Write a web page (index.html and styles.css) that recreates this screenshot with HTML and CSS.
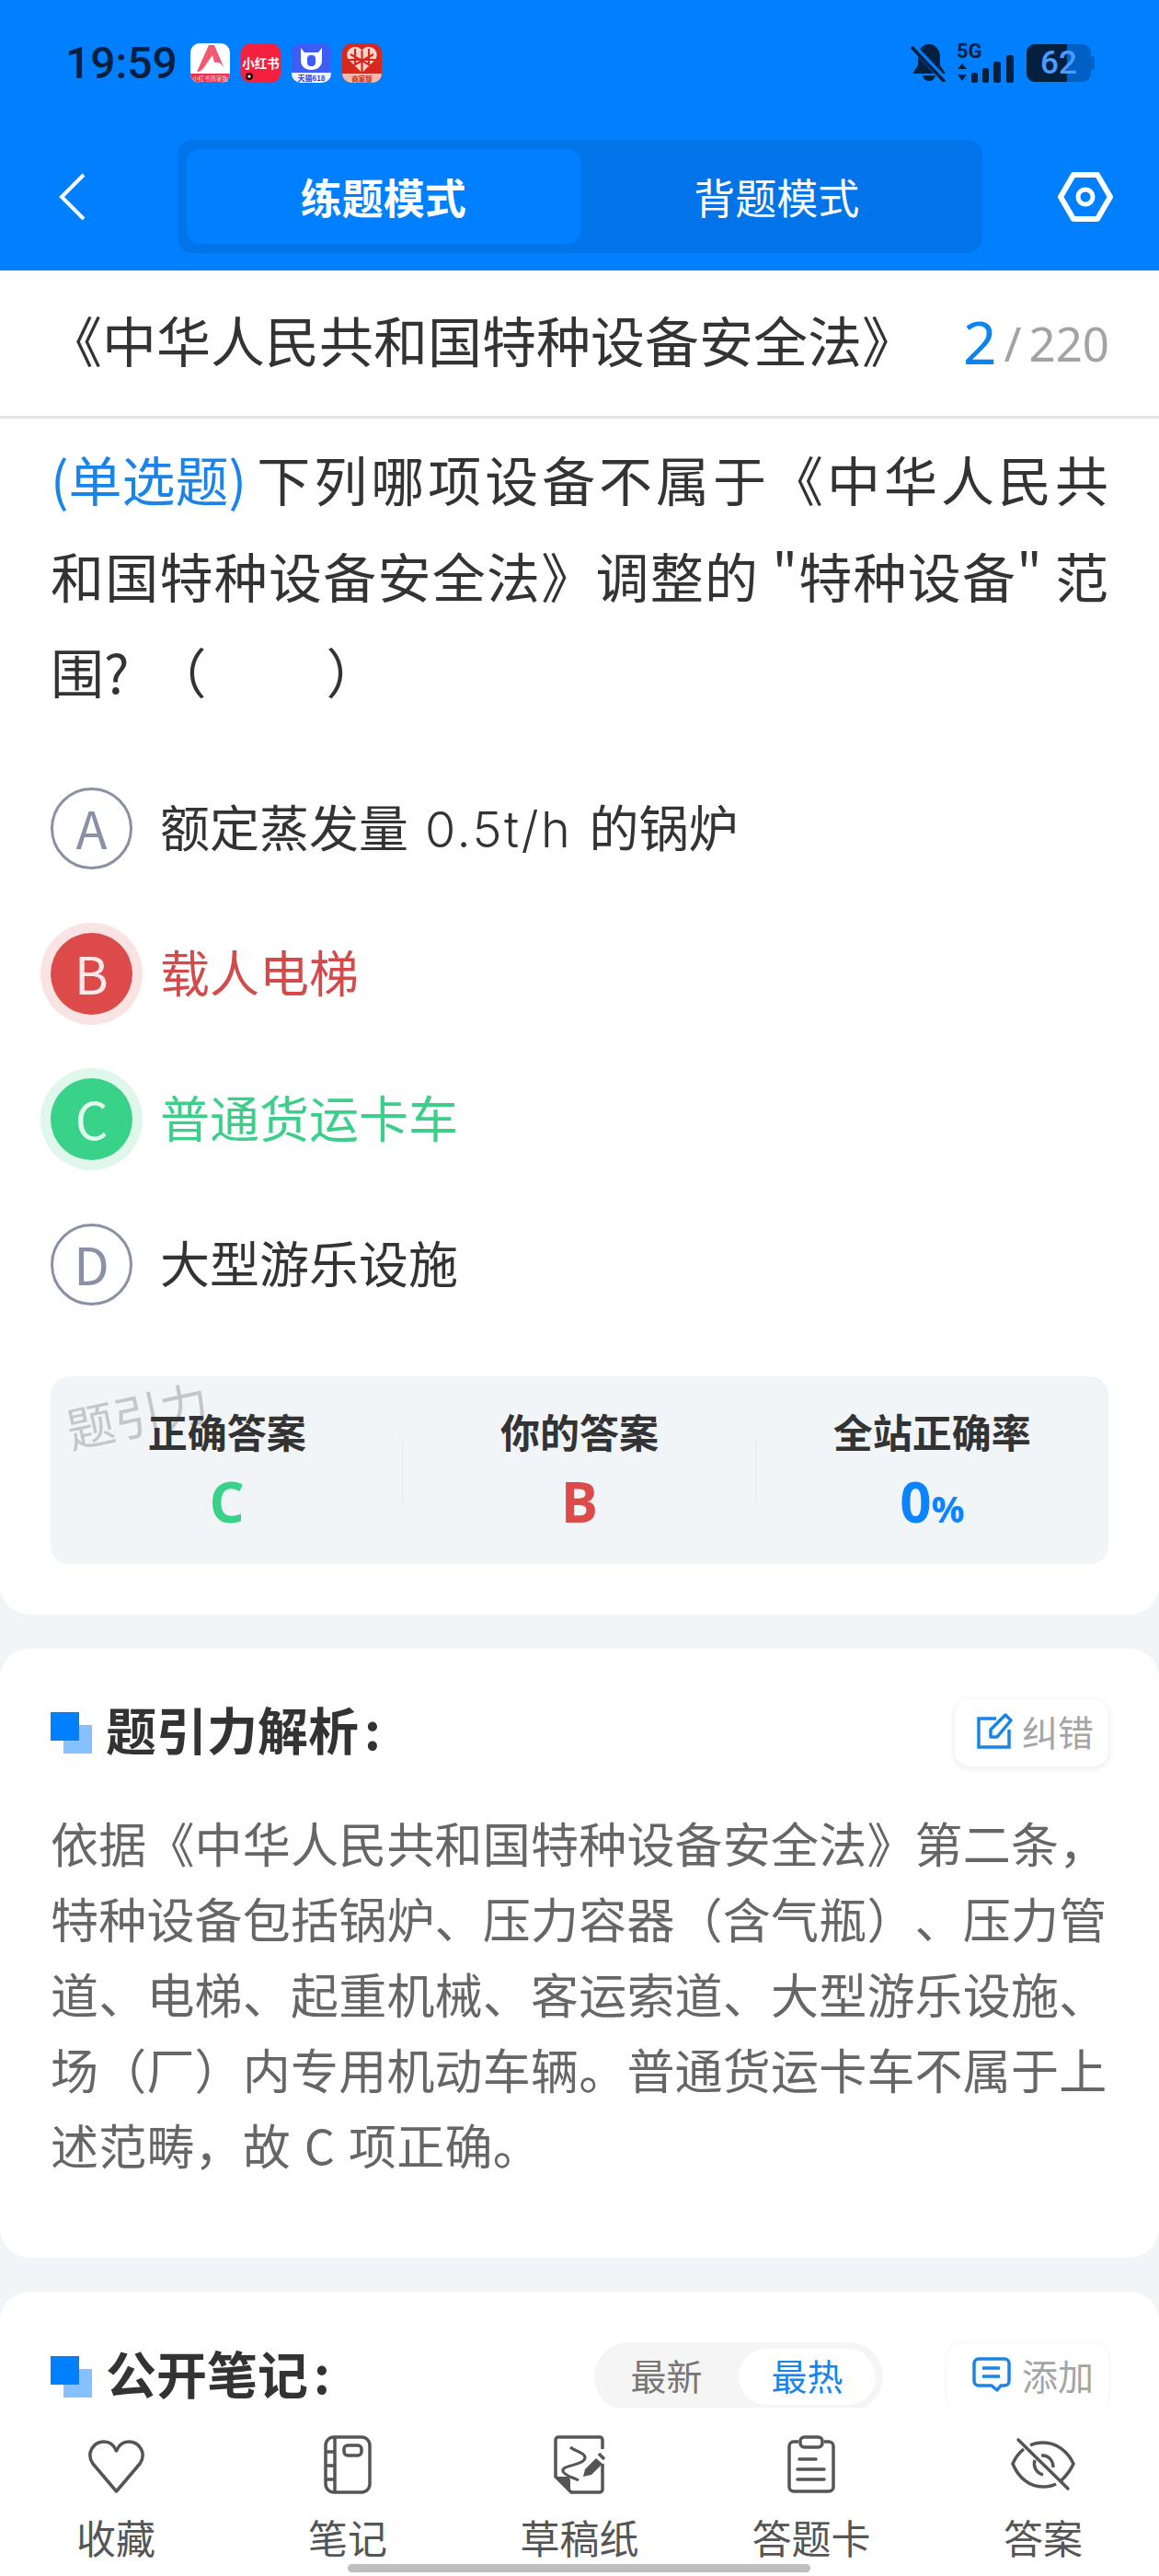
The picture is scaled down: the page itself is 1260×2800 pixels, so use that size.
FILE: index.html
```html
<!DOCTYPE html>
<html lang="zh-CN">
<head>
<meta charset="UTF-8">
<meta name="viewport" content="width=device-width, initial-scale=1.0">
<title>练题模式</title>
<link rel="stylesheet" href="styles.css">
</head>
<body>
<div class="phone">
    <header class="top">
        <div class="status">
            <span class="time">19:59</span>
            <svg class="app" viewBox="0 0 43 43">
                <rect width="43" height="43" rx="10" fill="#fff"/>
                <path d="M0 33H43A10 10 0 0 1 33 43H10A10 10 0 0 1 0 33Z" fill="#ee2f50"/>
                <path d="M7 31 20 2H26L37 28C34 21 29 20 26 21L24 13 15 26C12 30 10 31 7 31Z" fill="#f0596f"/>
                <text class="app-text" x="21.5" y="41" font-size="6.5" fill="#ffd5dc" text-anchor="middle">小红书商家版</text>
            </svg>
            <svg class="app" viewBox="0 0 43 43">
                <rect width="43" height="43" rx="10" fill="#f5203f"/>
                <text class="app-text bold" x="21.5" y="27" font-size="13.5" fill="#fff" text-anchor="middle">小红书</text>
                <circle cx="9" cy="36" r="4" fill="#200"/>
                <circle cx="9" cy="36" r="1.6" fill="#fff"/>
            </svg>
            <svg class="app" viewBox="0 0 43 43">
                <rect width="43" height="43" rx="10" fill="#3f5cf5"/>
                <path d="M0 32H43V33A10 10 0 0 1 33 43H10A10 10 0 0 1 0 33Z" fill="#f2f5ff"/>
                <path d="M10 5 14 10H29L33 5V19C33 25 28 29 21.500 29S10 25 10 19Z" fill="#fff"/>
                <rect x="17" y="13" width="9" height="12" rx="4" fill="#3f5cf5"/>
                <text class="app-text bold" x="21.5" y="41" font-size="8" fill="#2b45d8" text-anchor="middle">天猫618</text>
            </svg>
            <svg class="app" viewBox="0 0 43 43">
                <rect width="43" height="43" rx="10" fill="#d8281e"/>
                <path d="M0 33H43A10 10 0 0 1 33 43H10A10 10 0 0 1 0 33Z" fill="#f6b8a8"/>
                <path d="M21.500 32 7 18C2 10 9 3 15 4 18 4 20 6 21.500 8 23 6 25 4 28 4 34 3 41 10 36 18Z" fill="#f7d5cb"/>
                <path d="M21.500 8V32M9 12 34 26M34 12 9 26M14 6V24M29 6V24M6 18H37" stroke="#d8281e" stroke-width="2.200" fill="none"/>
                <text class="app-text bold" x="21.5" y="41.500" font-size="7.500" fill="#c9301f" text-anchor="middle">商家版</text>
            </svg>
            <div class="status-right">
                <svg class="bell" viewBox="0 0 40 42">
                    <path d="M20 1C27 1 32 7 32 15V24L38 33H2L8 24V15C8 7 13 1 20 1Z" fill="#04203f"/>
                    <path d="M13 35H27C26 39 23 41 20 41S14 39 13 35Z" fill="#04203f"/>
                    <path d="M2 3 38 41" stroke="#0080ff" stroke-width="7"/>
                    <path d="M1 4 37 42" stroke="#04203f" stroke-width="3.500"/>
                </svg>
                <svg class="signal" viewBox="0 0 63 43">
                    <text class="net" x="0" y="16" font-size="22">5G</text>
                    <path d="M6 22 11 28H1ZM6 41 1 34H11Z" fill="#04203f"/>
                    <rect x="16" y="32" width="7" height="11" rx="2.500" fill="#04203f"/>
                    <rect x="28" y="27" width="7" height="16" rx="2.500" fill="#04203f"/>
                    <rect x="40" y="20" width="8" height="23" rx="2.500" fill="#04203f"/>
                    <rect x="54" y="13" width="8" height="30" rx="2.500" fill="#04203f"/>
                </svg>
                <div class="battery">
                    <div class="battery-fill"></div>
                    <span class="battery-num">62</span>
                </div>
            </div>
        </div>
        <nav class="nav">
            <svg class="back" viewBox="0 0 29 52">
                <polyline points="27,2 3,26 27,50" fill="none" stroke="#fff" stroke-width="4"/>
            </svg>
            <div class="seg">
                <div class="seg-item on">练题模式</div>
                <div class="seg-item">背题模式</div>
            </div>
            <svg class="gear" viewBox="0 0 60 54">
                <polygon points="17,3 43,3 57,27 43,51 17,51 3,27" fill="none" stroke="#fff" stroke-width="6" stroke-linejoin="round"/>
                <circle cx="30" cy="27" r="8" fill="none" stroke="#fff" stroke-width="5"/>
            </svg>
        </nav>
    </header>

    <main class="scroll">
        <section class="card first">
            <div class="book">
                <div class="book-name">《中华人民共和国特种设备安全法》</div>
                <div class="count"><span class="cur">2</span><span class="slash">/</span><span class="total">220</span></div>
            </div>
            <div class="question">
                <span class="q-line"><span class="q-type">(单选题)</span>下列哪项设备不属于《中华人民共</span>
                和国特种设备安全法》调整的 "特种设备" 范围?&nbsp; （&nbsp;&nbsp;&nbsp;&nbsp;&nbsp;&nbsp;&nbsp;&nbsp;&nbsp;&nbsp;）
            </div>
            <ul class="options">
                <li class="opt"><span class="mark">A</span><span>额定蒸发量 <span class="latin">0.5t/h</span> 的锅炉</span></li>
                <li class="opt wrong"><span class="mark">B</span><span>载人电梯</span></li>
                <li class="opt right"><span class="mark">C</span><span>普通货运卡车</span></li>
                <li class="opt"><span class="mark">D</span><span>大型游乐设施</span></li>
            </ul>
            <div class="stats">
                <div class="watermark">题引力</div>
                <div class="stat">
                    <div class="stat-name">正确答案</div>
                    <div class="stat-val green">C</div>
                </div>
                <div class="stat line">
                    <div class="stat-name">你的答案</div>
                    <div class="stat-val red">B</div>
                </div>
                <div class="stat line">
                    <div class="stat-name">全站正确率</div>
                    <div class="stat-val blue">0<small>%</small></div>
                </div>
            </div>
        </section>

        <section class="card analysis">
            <div class="sec-head">
                <div class="sec-title"><span class="squares"></span>题引力解析<span class="colon">:</span></div>
                <div class="mini-btn">
                    <svg class="mini-icon" viewBox="0 0 40 40">
                        <path d="M21 7H2V38H35V19" fill="none" stroke="#1a84e8" stroke-width="3.500"/>
                        <path d="M15 27V19L31 3 37 9 22 27Z" fill="none" stroke="#1a84e8" stroke-width="3.500" stroke-linejoin="round"/>
                    </svg>
                    纠错
                </div>
            </div>
            <p class="analysis-text">依据《中华人民共和国特种设备安全法》第二条，特种设备包括锅炉、压力容器（含气瓶）、压力管道、电梯、起重机械、客运索道、大型游乐设施、场（厂）内专用机动车辆。普通货运卡车不属于上述范畴，故 C 项正确。</p>
        </section>

        <section class="card notes">
            <div class="sec-head">
                <div class="sec-title"><span class="squares"></span>公开笔记<span class="colon">:</span></div>
                <div class="sort">
                    <span class="sort-item">最新</span>
                    <span class="sort-item on">最热</span>
                </div>
                <div class="mini-btn add">
                    <svg class="mini-icon" viewBox="0 0 42 38">
                        <path d="M7 2H35A5 5 0 0 1 40 7V26A5 5 0 0 1 35 31H31L27 36 21 31H7A5 5 0 0 1 2 26V7A5 5 0 0 1 7 2Z" fill="none" stroke="#1a84e8" stroke-width="3.500" stroke-linejoin="round"/>
                        <path d="M11 12H30M11 21H30" stroke="#1a84e8" stroke-width="3.500"/>
                    </svg>
                    添加
                </div>
            </div>
        </section>
    </main>

    <footer class="tabs">
        <div class="tab">
            <svg class="tab-icon" width="65" height="64" viewBox="0 0 65 64">
                <path d="M32.500 61 7 31C-1 19 8 7 19 7 25 7 30 11 32.500 17 35 11 40 7 46 7 57 7 66 19 58 31Z" fill="none" stroke="#555" stroke-width="3.500" stroke-linejoin="round"/>
            </svg>
            <span>收藏</span>
        </div>
        <div class="tab">
            <svg class="tab-icon" width="52" height="64" viewBox="0 0 52 64">
                <rect x="2" y="2" width="48" height="60" rx="9" fill="none" stroke="#555" stroke-width="3.500"/>
                <path d="M12 2V62M2 18H12M2 33H12M2 48H12" fill="none" stroke="#555" stroke-width="3.500"/>
                <rect x="22" y="11" width="19" height="11" rx="4" fill="none" stroke="#555" stroke-width="3.500"/>
            </svg>
            <span>笔记</span>
        </div>
        <div class="tab">
            <svg class="tab-icon" width="56" height="64" viewBox="0 0 56 64">
                <path d="M53 15V5A3 3 0 0 0 50 2H5A3 3 0 0 0 2 5V45L19 62H50A3 3 0 0 0 53 59V31" fill="none" stroke="#555" stroke-width="3.500" stroke-linejoin="round"/>
                <path d="M3 45H14C17 45 18 47 18 50V61Z" fill="#555"/>
                <path d="M18 13C24 18 38 20 33 27 28 33 8 33 10 39 11 44 22 46 27 49" fill="none" stroke="#555" stroke-width="3"/>
                <path d="M32 45 34 37 46 25 53 31 41 43Z" fill="#555"/>
                <path d="M49 20 55 26" stroke="#555" stroke-width="3.500"/>
            </svg>
            <span>草稿纸</span>
        </div>
        <div class="tab">
            <svg class="tab-icon" width="54" height="64" viewBox="0 0 54 64">
                <path d="M13 7H8A5 5 0 0 0 3 12V56A5 5 0 0 0 8 61H46A5 5 0 0 0 51 56V12A5 5 0 0 0 46 7H41" fill="none" stroke="#555" stroke-width="3.500"/>
                <rect x="15" y="2" width="24" height="11" rx="4.500" fill="none" stroke="#555" stroke-width="3.500"/>
                <path d="M14 26H32M12 37H41M12 48H41" stroke="#555" stroke-width="3.500" stroke-linecap="round"/>
            </svg>
            <span>答题卡</span>
        </div>
        <div class="tab">
            <svg class="tab-icon" width="70" height="64" viewBox="0 0 70 64">
                <path d="M14 15C8 20 4 26 2 31 8 46 20 56 35 56 40 56 45 55 49 53" fill="none" stroke="#555" stroke-width="3.500"/>
                <path d="M21 11C25 9 30 8 35 8 50 8 62 18 68 31 65 38 60 44 55 49" fill="none" stroke="#555" stroke-width="3.500"/>
                <path d="M26 27C24 33 27 41 35 43M33 22C40 21 46 27 46 35" fill="none" stroke="#555" stroke-width="3.500"/>
                <path d="M8 5 62 58" stroke="#555" stroke-width="3.500" stroke-linecap="round"/>
            </svg>
            <span>答案</span>
        </div>
    </footer>
    <div class="home-bar"></div>
</div>
</body>
</html>
```

FILE: styles.css
```css
* {
    box-sizing: border-box;
}
html, body {
    margin: 0;
    padding: 0;
}
body {
    font-family: "Noto Sans CJK SC", "Noto Sans", sans-serif;
    color: #333;
    text-spacing-trim: space-all;
}
.phone {
    position: relative;
    width: 1260px;
    height: 2800px;
    display: flex;
    flex-direction: column;
    overflow: hidden;
    background: #f2f5f8;
}

/* top blue area */
.top {
    flex: none;
    height: 294px;
    background: #0080ff;
}
.status {
    display: flex;
    align-items: center;
    height: 152px;
    padding: 0 70px 16px 71px;
}
.time {
    width: 136px;
    font-family: Roboto, sans-serif;
    font-size: 48px;
    font-weight: 500;
    color: #04203f;
}
.app {
    width: 43px;
    height: 43px;
    margin-right: 12px;
}
.app-text {
    font-family: "Noto Sans CJK SC", sans-serif;
}
.bold {
    font-weight: 700;
}
.status-right {
    display: flex;
    align-items: center;
    margin-left: auto;
}
.bell {
    width: 40px;
    height: 42px;
}
.signal {
    width: 63px;
    height: 43px;
    margin-left: 10px;
    overflow: visible;
}
.net {
    font-family: Roboto, sans-serif;
    font-weight: 700;
    fill: #04203f;
}
.battery {
    position: relative;
    width: 70px;
    height: 41px;
    margin-left: 13px;
    margin-right: 4px;
    border-radius: 9px;
    background: #0060c4;
}
.battery::after {
    content: "";
    position: absolute;
    right: -4px;
    top: 13px;
    width: 4px;
    height: 15px;
    border-radius: 0 3px 3px 0;
    background: #0060c4;
}
.battery-fill {
    width: 44px;
    height: 100%;
    border-radius: 9px 0 0 9px;
    background: #04203f;
}
.battery-num {
    position: absolute;
    left: 15px;
    top: 0;
    font-family: Roboto, sans-serif;
    font-size: 35px;
    line-height: 41px;
    font-weight: 500;
    color: #4c9cff;
}
.nav {
    display: flex;
    align-items: center;
    height: 123px;
    padding-left: 64px;
}
.back {
    width: 29px;
    height: 52px;
}
.seg {
    display: flex;
    width: 875px;
    height: 123px;
    margin-left: 100px;
    padding: 10px;
    border-radius: 16px;
    background: #0074e8;
}
.seg-item {
    flex: 1;
    display: flex;
    align-items: center;
    justify-content: center;
    border-radius: 14px;
    font-size: 45px;
    color: #fff;
}
.seg-item.on {
    background: #0080ff;
    font-weight: 700;
}
.gear {
    width: 60px;
    height: 54px;
    margin-left: 82px;
}

/* cards */
.scroll {
    flex: 1;
    min-height: 0;
    overflow: hidden;
}
.card {
    background: #fff;
    border-radius: 32px;
    margin-bottom: 37px;
    padding: 0 55px;
}
.first {
    border-radius: 0 0 32px 32px;
    padding-bottom: 55px;
}
.book {
    display: flex;
    align-items: center;
    justify-content: space-between;
    height: 161px;
    margin: 0 -55px;
    padding: 0 54px 9px 52px;
    border-bottom: 3px solid #e4e4e4;
}
.book-name {
    font-size: 59px;
    line-height: 84px;
    white-space: nowrap;
}
.count {
    display: flex;
    align-items: baseline;
    padding-top: 4px;
    color: #a3a3a3;
    font-family: "Noto Sans", sans-serif;
    font-size: 51px;
    line-height: 84px;
}
.cur {
    font-size: 64px;
    color: #0b84f0;
    transform: translateY(3px);
}
.slash {
    margin: 0 8px;
}
.question {
    margin: 0;
    padding-top: 13px;
    font-size: 58px;
    line-height: 104.500px;
    text-align: justify;
}
.q-line {
    display: block;
    text-align-last: justify;
}
.q-type {
    display: inline-block;
    margin-right: 7px;
    color: #1a84e8;
}
.options {
    list-style: none;
    margin: 40px 0 0;
    padding: 0;
}
.opt {
    display: flex;
    align-items: center;
    height: 158px;
    padding-bottom: 6px;
    font-size: 54px;
    word-spacing: 6px;
}
.latin {
    font-family: Inter, sans-serif;
    font-weight: 300;
    letter-spacing: 2.500px;
}
.mark {
    flex: none;
    display: flex;
    align-items: center;
    justify-content: center;
    width: 89px;
    height: 89px;
    margin-top: 6px;
    margin-right: 30px;
    padding-bottom: 4px;
    border: 3px solid #8a90a5;
    border-radius: 50%;
    font-size: 56px;
    color: #8a90a5;
}
.wrong {
    color: #d24b4b;
}
.wrong .mark {
    border: 0;
    background: #dc4a4a;
    box-shadow: 0 0 0 11px #fae3e3;
    color: #fde9e9;
}
.right {
    color: #3ccf8a;
}
.right .mark {
    border: 0;
    background: #39d289;
    box-shadow: 0 0 0 11px #e0f7ec;
    color: #e3faef;
}

.stats {
    position: relative;
    display: flex;
    height: 204px;
    margin-top: 42px;
    border-radius: 20px;
    background: #f2f5f8;
}
.stat {
    position: relative;
    flex: 1;
    text-align: center;
    padding-top: 28px;
}
.line::before {
    content: "";
    position: absolute;
    left: -1px;
    top: 68px;
    height: 71px;
    border-left: 1px solid #e6e9ec;
}
.stat-name {
    font-size: 43px;
    line-height: 62px;
    font-weight: 700;
}
.stat-val {
    margin-top: 8px;
    font-family: "Open Sans", sans-serif;
    font-size: 60px;
    line-height: 76px;
    font-weight: 700;
}
.stat-val small {
    font-size: 40px;
}
.green {
    color: #39d289;
}
.red {
    color: #dc4a4a;
}
.blue {
    color: #0b84ff;
}
.watermark {
    position: absolute;
    left: 16px;
    top: 11px;
    font-size: 52px;
    line-height: 60px;
    color: #c4c6c8;
    transform: rotate(-12deg);
}

/* section head */
.analysis {
    padding-top: 55px;
    padding-bottom: 82px;
}
.notes {
    padding-top: 56px;
    padding-bottom: 200px;
    margin-bottom: 0;
}
.sec-head {
    display: flex;
    align-items: center;
    height: 73px;
}
.sec-title {
    display: flex;
    align-items: center;
    padding-bottom: 10px;
    font-size: 55px;
    line-height: 60px;
    font-weight: 700;
}
.colon {
    margin-left: 6px;
}
.squares {
    width: 45px;
    height: 45px;
    margin-top: 10px;
    margin-right: 15px;
    background: linear-gradient(#85c1ff, #85c1ff) 14px 14px / 31px 31px no-repeat;
}
.squares::before {
    content: "";
    display: block;
    width: 31px;
    height: 31px;
    background: #0080ff;
}
.mini-btn {
    display: flex;
    align-items: center;
    gap: 9px;
    height: 73px;
    margin-left: auto;
    padding: 0 16px 4px 24px;
    border-radius: 16px;
    background: #fff;
    box-shadow: 0 2px 9px rgba(0, 0, 0, 0.09);
    font-size: 39px;
    color: #a5a5a5;
}
.mini-icon {
    width: 40px;
    height: 40px;
}
.add {
    margin-left: 70px;
    gap: 12px;
    box-shadow: 0 0 6px rgba(0, 0, 0, 0.06);
    padding-left: 27px;
}
.add .mini-icon {
    width: 42px;
}
.sort {
    display: flex;
    align-items: center;
    height: 75px;
    margin-left: auto;
    padding: 7px 8px 7px 0;
    border-radius: 38px;
    background: #f5f5f5;
    font-size: 39px;
    color: #777;
}
.sort-item {
    display: flex;
    align-items: center;
    justify-content: center;
    width: 157px;
    height: 61px;
    padding-bottom: 4px;
}
.sort-item.on {
    width: 149px;
    border-radius: 31px;
    background: #fff;
    color: #1a84e8;
}
.analysis-text {
    margin: 42px 0 0;
    font-size: 52px;
    letter-spacing: 0.200px;
    line-height: 82px;
    color: #666;
    word-spacing: 3px;
}

/* bottom tabs */
.tabs {
    flex: none;
    display: flex;
    height: 183px;
    padding-top: 30px;
    background: #fff;
}
.tab {
    flex: 1;
    display: flex;
    flex-direction: column;
    align-items: center;
    font-size: 43px;
    line-height: 50px;
    color: #555;
}
.tab-icon {
    display: block;
    margin-bottom: 21px;
}
.home-bar {
    position: absolute;
    left: 378px;
    bottom: 4px;
    width: 503px;
    height: 9px;
    border-radius: 5px;
    background: #bfbfbf;
}
```
